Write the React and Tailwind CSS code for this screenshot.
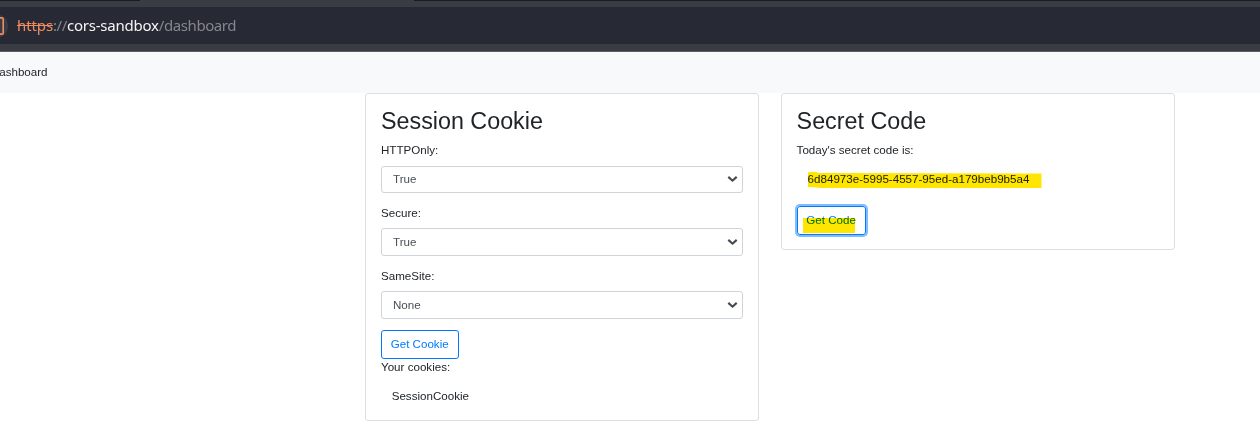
import React from "react";

function SelectField({ label, value, className, labelClass, boxClass }) {
  return (
    <div className={className}>
      <div className={labelClass}>{label}</div>
      <div
        className={`flex items-center justify-between rounded-[3px] border border-[#ced4da] bg-white pl-[11px] pr-[4px] text-[#495057] ${boxClass}`}
      >
        <span className="leading-[17px]">{value}</span>
        <svg className="mt-px" width="11" height="8" viewBox="0 0 11 8" fill="none">
          <path d="M1.3 1.9 L5.5 5.7 L9.7 1.9" stroke="#42494f" strokeWidth="2.1" />
        </svg>
      </div>
    </div>
  );
}

function AddressBar() {
  return (
    <header className="bg-[#3a3c43]">
      <div className="flex h-px justify-between">
        <div className="w-[140px] bg-[#191b26]" />
        <div className="w-[846px] bg-[#191b26]" />
      </div>
      <div className="mt-[6px] flex h-[37px] items-center overflow-hidden bg-[#272935]">
        <div className="-ml-[16px] flex h-[24px] w-[24px] shrink-0 items-center justify-end rounded-full bg-[#3a3c43] pr-[4px]">
          <svg width="12" height="18" viewBox="0 0 12 18" fill="none">
            <rect x="0.8" y="0.9" width="10.4" height="16.2" rx="1.2" stroke="#f28b60" strokeWidth="1.6" />
          </svg>
        </div>
        <div className="-mt-[2px] ml-[9px] whitespace-nowrap font-['Noto_Sans',sans-serif] text-[15px] leading-[20px] tracking-[-0.42px] text-[#85878d]">
          <span className="tracking-[-0.1px] text-[#f28b60] line-through">https</span>
          <span>://</span>
          <span className="tracking-[-0.22px] text-[#f5f5f5]">cors-sandbox</span>
          <span>/dashboard</span>
        </div>
      </div>
      <div className="h-[7px]" />
      <div className="h-px bg-[#5c5d62]" />
    </header>
  );
}

export default function App() {
  return (
    <div className="h-[432px] w-[1260px] overflow-hidden bg-white font-['Liberation_Sans',sans-serif] text-[11.6px] text-[#212529]">
      <AddressBar />
      <nav className="flex h-[41px] items-center bg-[#f8f9fb] pb-[2px] text-[#212529]">
        <span className="-ml-[0.8px] leading-[17px]">ashboard</span>
      </nav>
      <main className="flex items-start gap-[22px] pl-[365px]">
        <section className="h-[328px] w-[394px] rounded-[3px] border border-[#dfdfdf] bg-white px-[15px] pt-[14px]">
          <h2 className="h-[27px] text-[23.3px] leading-[27px]">Session Cookie</h2>
          <SelectField
            label="HTTPOnly:"
            value="True"
            className="mt-[7px]"
            labelClass="h-[24px] leading-[15px]"
            boxClass="h-[27px] pb-[2px]"
          />
          <SelectField
            label="Secure:"
            value="True"
            className="mt-[12px]"
            labelClass="h-[23px] leading-[15px]"
            boxClass="h-[28px] pb-px"
          />
          <SelectField
            label="SameSite:"
            value="None"
            className="mt-[12px]"
            labelClass="h-[23px] leading-[15px]"
            boxClass="h-[28px] pb-[2px]"
          />
          <button className="mt-[11px] flex h-[29px] w-[78px] items-center rounded-[3px] border border-[#007bff] pb-[2px] pl-[8.7px] leading-[17px] text-[#007bff]">
            Get Cookie
          </button>
          <p className="h-[17px] leading-[15px]">Your cookies:</p>
          <p className="mt-[12px] h-[17px] pl-[10.7px] leading-[15px]">SessionCookie</p>
        </section>
        <section className="h-[157px] w-[394px] rounded-[3px] border border-[#dfdfdf] bg-white pl-[14.6px] pr-[15px] pt-[14px]">
          <h2 className="h-[27px] text-[23.3px] leading-[27px]">Secret Code</h2>
          <p className="mt-[7px] h-[17px] leading-[15px]">Today's secret code is:</p>
          <p className="relative mt-[12px] h-[17px] pl-[11px] leading-[15px]">
            6d84973e-5995-4557-95ed-a179beb9b5a4
            <svg
              className="absolute left-[11px] top-0 mix-blend-multiply"
              width="234"
              height="18"
              viewBox="0 0 234 18"
            >
              <path d="M0 1.5 Q5 0 11 2 L233.5 2.5 V17 H12 Q6 16 0 16 Z" fill="#ffe600" />
            </svg>
          </p>
          <button className="relative mt-[18px] flex h-[29px] w-[69.4px] items-center rounded-[3px] border border-[#007bff] pb-[2px] pl-[8.7px] leading-[17px] text-[#007bff] ring-2 ring-[#80bdff]">
            Get Code
            <span className="absolute left-[5.4px] top-[11px] h-[15px] w-[52px] bg-[#ffe600] mix-blend-multiply" />
          </button>
        </section>
      </main>
    </div>
  );
}
